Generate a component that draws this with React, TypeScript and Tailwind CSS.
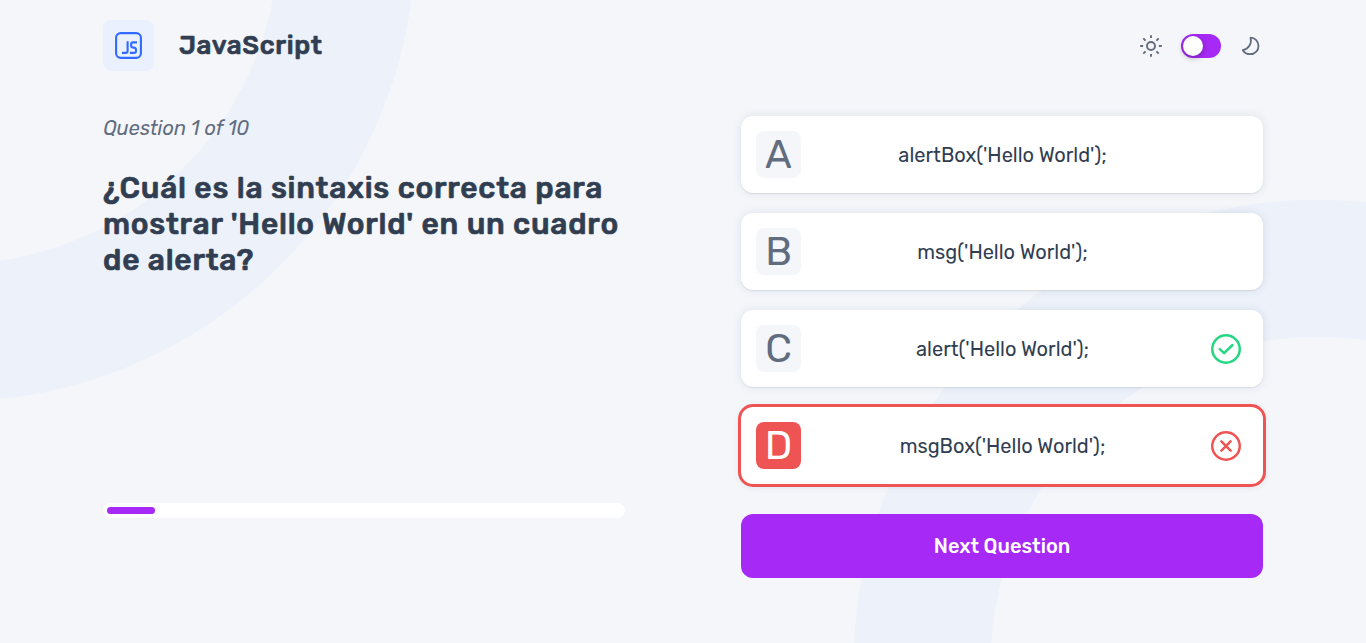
import React from "react";

type Status = "correct" | "wrong" | null;

type Option = {
  letter: string;
  text: string;
  status: Status;
  selected?: boolean;
};

const options: Option[] = [
  { letter: "A", text: "alertBox('Hello World');", status: null },
  { letter: "B", text: "msg('Hello World');", status: null },
  { letter: "C", text: "alert('Hello World');", status: "correct" },
  { letter: "D", text: "msgBox('Hello World');", status: "wrong", selected: true },
];

function BackgroundRings() {
  return (
    <svg
      className="pointer-events-none absolute inset-0 h-full w-full"
      viewBox="0 0 1366 643"
      preserveAspectRatio="none"
      fill="none"
      stroke="#ecf1fa"
      strokeWidth="137"
      aria-hidden="true"
    >
      <circle cx="-47.5" cy="-62" r="394.7" />
      <circle cx="1317" cy="663" r="394.7" />
    </svg>
  );
}

function JsIcon() {
  return (
    <svg className="size-[27px]" viewBox="0 0 27 27" fill="none" stroke="#306aff" strokeWidth="2.1" strokeLinecap="round" strokeLinejoin="round">
      <rect x="1.1" y="1.1" width="24.8" height="24.8" rx="4.6" />
      <path strokeLinecap="butt" d="M12.6 9.3v9.6a2 2 0 0 1-2 2H7" />
      <path strokeLinecap="butt" d="M22 10.4h-3.9a2 2 0 0 0-2 2v1.2a2 2 0 0 0 2 2h.9a2 2 0 0 1 2 2v1.3a2 2 0 0 1-2 2h-4.1" />
    </svg>
  );
}

function SunIcon() {
  return (
    <svg className="size-6" viewBox="0 0 24 24" fill="none" stroke="#626c7f" strokeWidth="1.9">
      <circle cx="12" cy="12" r="4" />
      <path d="M12 1.2v2.9M12 19.9v2.9M1.2 12h2.9M19.9 12h2.9M4.3 4.3l2.3 2.3M17.4 17.4l2.3 2.3M4.3 19.7l2.3-2.3M17.4 6.6l2.3-2.3" />
    </svg>
  );
}

function MoonIcon() {
  return (
    <svg className="size-6" viewBox="0 0 24 24" fill="none" stroke="#626c7f" strokeWidth="1.8" strokeLinejoin="round">
      <path d="M11.6 3.7C13 9.5 10 14.6 3.8 16.2c1.6 2.6 4.3 4 7.4 4 4.6 0 8.3-3.7 8.3-8.3s-3.5-8.2-7.9-8.2Z" />
    </svg>
  );
}

function StatusIcon({ status }: { status: Status }) {
  if (status === "correct") {
    return (
      <svg className="size-[30px]" viewBox="0 0 30 30" fill="none" stroke="#26d782" strokeWidth="2.5" strokeLinecap="round" strokeLinejoin="round">
        <circle cx="15" cy="15" r="13.75" />
        <path d="m8.8 15.2 4.3 4 8.4-8.2" />
      </svg>
    );
  }
  if (status === "wrong") {
    return (
      <svg className="size-[30px]" viewBox="0 0 30 30" fill="none" stroke="#ee5454" strokeWidth="2.5" strokeLinecap="round">
        <circle cx="15" cy="15" r="13.75" />
        <path d="m10.4 10.4 9.2 9.2M19.6 10.4l-9.2 9.2" />
      </svg>
    );
  }
  return null;
}

function OptionCard({ option }: { option: Option }) {
  const ring = option.selected
    ? "shadow-[0_0_0_3px_#ee5454,0_1px_6px_2px_rgba(49,62,81,0.1)]"
    : "shadow-[0_1px_1px_rgba(49,62,81,0.1),0_0_10px_rgba(49,62,81,0.11)]";
  const tile = option.selected ? "bg-[#ee5454] text-white" : "bg-[#f4f6fa] text-[#626c7f]";
  return (
    <button className={`grid h-[77px] w-full grid-cols-[45px_1fr_45px] items-center rounded-xl bg-white px-[15px] ${ring}`}>
      <span className={`flex h-[47px] items-center justify-center rounded-lg text-[40px] leading-[47px] ${tile}`}>
        {option.letter}
      </span>
      <span className="pl-px text-center text-xl leading-6">{option.text}</span>
      <span className="flex justify-center">
        <StatusIcon status={option.status} />
      </span>
    </button>
  );
}

export default function App() {
  return (
    <div className="relative h-[643px] overflow-hidden bg-[#f4f6fa] font-['Rubik','Roboto',sans-serif] text-[#313e51]">
      <BackgroundRings />
      <div className="relative mx-auto w-[1160px] pt-5">
        <header className="flex h-[51px] items-center justify-between">
          <div className="flex items-center gap-[25px]">
            <span className="flex size-[51px] items-center justify-center rounded-lg bg-[#ebf0ff]">
              <JsIcon />
            </span>
            <span className="text-[26px] leading-[34px] font-medium tracking-[0.68px] [-webkit-text-stroke:0.7px_#313e51]">JavaScript</span>
          </div>
          <div className="flex items-center gap-[18px]">
            <SunIcon />
            <button className="flex h-6 w-10 items-center rounded-full bg-[#a729f5] p-0.5" aria-label="Theme">
              <span className="size-5 rounded-full bg-white shadow-[0_2px_6px_rgba(0,0,0,0.3)]" />
            </button>
            <MoonIcon />
          </div>
        </header>

        <main className="mt-[45px] grid grid-cols-2 gap-[116px]">
          <section className="flex h-[402px] flex-col">
            <p className="text-xl leading-6 text-[#626c7f] italic">Question 1 of 10</p>
            <h1 className="mt-[30px] text-[30px] leading-9 font-medium tracking-[0.74px] whitespace-nowrap [-webkit-text-stroke:0.7px_#313e51]">
              ¿Cuál es la sintaxis correcta para
              <br />
              mostrar 'Hello World' en un cuadro
              <br />
              de alerta?
            </h1>
            <div className="mt-auto h-[15px] rounded-lg bg-white p-1">
              <div className="h-[7px] w-12 rounded-full bg-[#a729f5]" />
            </div>
          </section>

          <section>
            <div className="flex flex-col gap-5">
              {options.map((option) => (
                <OptionCard key={option.letter} option={option} />
              ))}
            </div>
            <button className="mt-[30px] h-16 w-full rounded-xl bg-[#a729f5] text-xl leading-6 font-medium text-white">
              Next Question
            </button>
          </section>
        </main>
      </div>
    </div>
  );
}
